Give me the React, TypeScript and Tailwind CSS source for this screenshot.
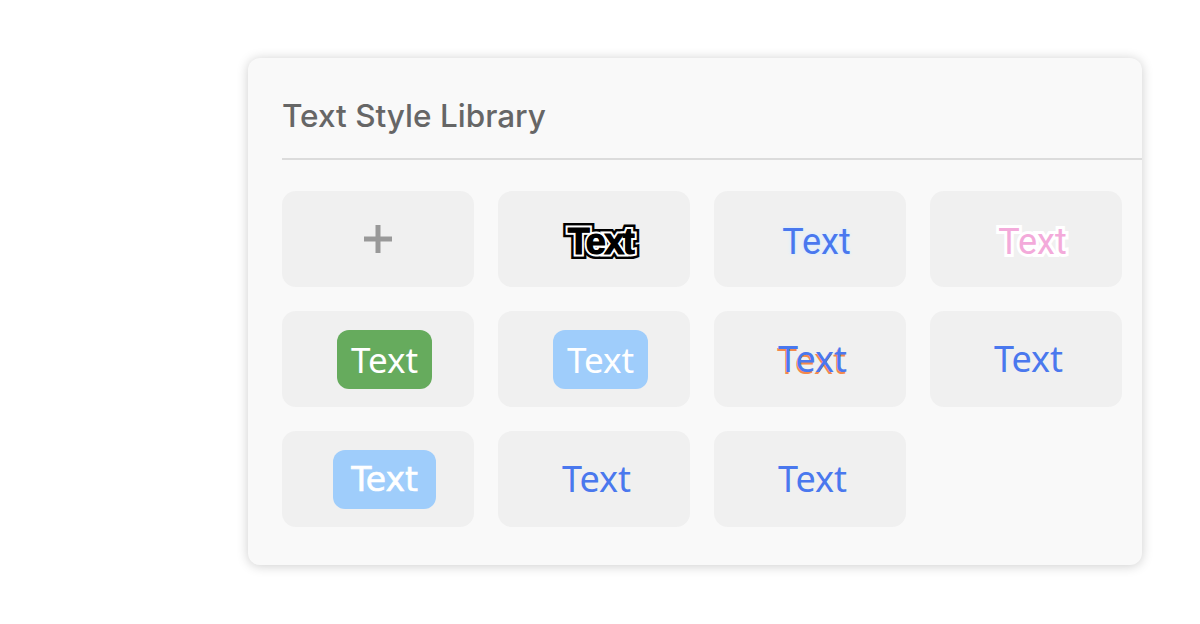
import React from "react";

function Cell({ children }: { children?: React.ReactNode }) {
  return (
    <div className="flex h-[96px] w-[192px] items-center justify-center rounded-[14px] bg-[#f0f0f0]">
      {children}
    </div>
  );
}

function Shift({ children }: { children?: React.ReactNode }) {
  return <div className="ml-[13px] flex items-center justify-center">{children}</div>;
}

function ShiftSm({ children }: { children?: React.ReactNode }) {
  return <div className="ml-[5px] flex items-center justify-center">{children}</div>;
}

export default function App() {
  return (
    <div className="h-[624px] w-[1200px] bg-white pl-[248px] pt-[58px]">
      <div className="h-[507px] w-[894px] overflow-hidden rounded-[12px] bg-[#f9f9f9] shadow-[0_1px_12px_rgba(0,0,0,0.2)]">
        <div className="pl-[34px] pt-[35px]">
          <div className="pb-[19px] font-['Inter',sans-serif] text-[31.5px] font-medium leading-[46px] text-[#666666]">
            Text Style Library
          </div>
          <div className="h-[2px] w-full bg-[#dcdcdc]"></div>
          <div className="mt-[31px] grid w-[840px] grid-cols-[repeat(4,192px)] gap-[24px]">
            <Cell>
              <svg width="32" height="32" viewBox="0 0 32 32">
                <rect x="13.5" y="2" width="5" height="28" fill="#999999" />
                <rect x="2" y="13.5" width="28" height="5" fill="#999999" />
              </svg>
            </Cell>
            <Cell>
              <Shift>
                <span className="relative mt-[6px] inline-block font-['Liberation_Sans',sans-serif] text-[36px] font-bold leading-none tracking-[-1.5px]">
                  <span className="text-black [-webkit-text-stroke:10px_#000000] [paint-order:stroke_fill]">Text</span>
                  <span className="absolute left-0 top-0 text-black [-webkit-text-stroke:5px_#ffffff] [paint-order:stroke_fill]">Text</span>
                  <span className="absolute left-0 top-0 text-black [-webkit-text-stroke:1px_#000000]">Text</span>
                </span>
              </Shift>
            </Cell>
            <Cell>
              <Shift>
                <span className="mt-[6px] font-['Roboto',sans-serif] text-[36px] leading-none text-[#4a78ee] [text-shadow:0_0_2px_#dcefff,0_0_3px_#dcefff,0_0_4px_#dcefff]">
                  Text
                </span>
              </Shift>
            </Cell>
            <Cell>
              <Shift>
                <span className="mt-[6px] font-['Roboto',sans-serif] text-[36px] leading-none text-[#f3aada] [-webkit-text-stroke:6px_#ffffff] [paint-order:stroke_fill]">
                  Text
                </span>
              </Shift>
            </Cell>
            <Cell>
              <Shift>
                <span className="flex h-[59px] w-[95px] items-center justify-center rounded-[12px] bg-[#66ab5d] font-['Noto_Sans',sans-serif] text-[35px] leading-none text-white">
                  Text
                </span>
              </Shift>
            </Cell>
            <Cell>
              <Shift>
                <span className="flex h-[59px] w-[95px] items-center justify-center rounded-[12px] bg-[#9fcdfb] font-['Noto_Sans',sans-serif] text-[35px] leading-none text-white">
                  Text
                </span>
              </Shift>
            </Cell>
            <Cell>
              <ShiftSm>
                <span className="font-['Noto_Sans',sans-serif] text-[36px] leading-none text-[#4a78ee] [text-shadow:-1px_2px_0_#f3894c]">
                  Text
                </span>
              </ShiftSm>
            </Cell>
            <Cell>
              <ShiftSm>
                <span className="font-['Noto_Sans',sans-serif] text-[36px] leading-none text-[#4a78ee]">Text</span>
              </ShiftSm>
            </Cell>
            <Cell>
              <Shift>
                <span className="flex h-[59px] w-[103px] items-center justify-center rounded-[12px] bg-[#9fcdfb] font-['DejaVu_Sans',sans-serif] text-[33px] leading-none text-white [-webkit-text-stroke:0.6px_#ffffff]">
                  Text
                </span>
              </Shift>
            </Cell>
            <Cell>
              <ShiftSm>
                <span className="font-['Noto_Sans',sans-serif] text-[36px] leading-none text-[#4a78ee]">Text</span>
              </ShiftSm>
            </Cell>
            <Cell>
              <ShiftSm>
                <span className="font-['Noto_Sans',sans-serif] text-[36px] leading-none text-[#4a78ee]">Text</span>
              </ShiftSm>
            </Cell>
          </div>
        </div>
      </div>
    </div>
  );
}
